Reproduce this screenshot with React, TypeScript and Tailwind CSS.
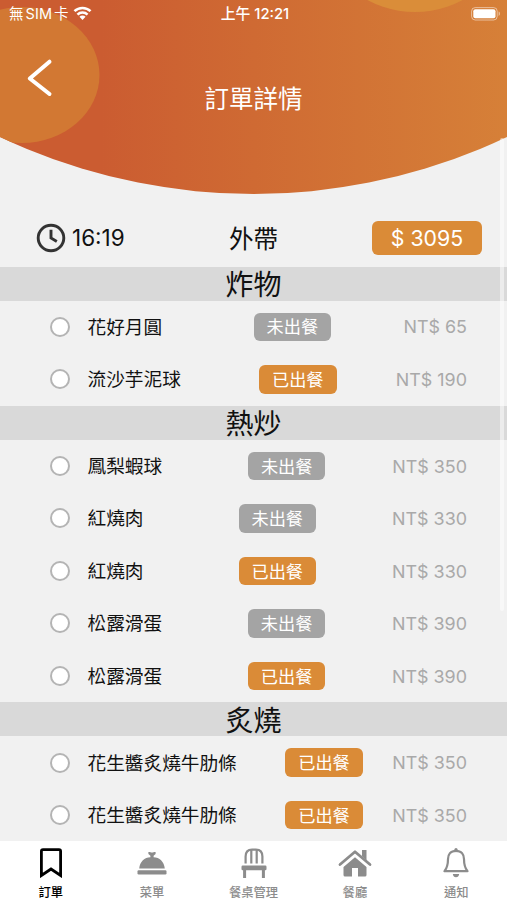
type Item = { name: string; served: boolean; price: number };
type Section = { title: string; items: Item[] };

const sections: Section[] = [
  {
    title: "炸物",
    items: [
      { name: "花好月圓", served: false, price: 65 },
      { name: "流沙芋泥球", served: true, price: 190 },
    ],
  },
  {
    title: "熱炒",
    items: [
      { name: "鳳梨蝦球", served: false, price: 350 },
      { name: "紅燒肉", served: false, price: 330 },
      { name: "紅燒肉", served: true, price: 330 },
      { name: "松露滑蛋", served: false, price: 390 },
      { name: "松露滑蛋", served: true, price: 390 },
    ],
  },
  {
    title: "炙燒",
    items: [
      { name: "花生醬炙燒牛肋條", served: true, price: 350 },
      { name: "花生醬炙燒牛肋條", served: true, price: 350 },
    ],
  },
];

function WifiIcon() {
  return (
    <svg width="19" height="14" viewBox="0 0 20 15" fill="none" stroke="white" strokeWidth="2.7">
      <path d="M1.4 5.6a12.2 12.2 0 0 1 17.2 0" />
      <path d="M4.6 9.2a7.7 7.7 0 0 1 10.8 0" />
      <path d="M10 15 6.7 11.6a4.7 4.7 0 0 1 6.6 0Z" fill="white" stroke="none" />
    </svg>
  );
}

function BatteryIcon() {
  return (
    <svg width="30" height="14" viewBox="0 0 30 14" fill="none">
      <rect x="0.6" y="0.6" width="25.6" height="12.4" rx="3.6" stroke="white" strokeOpacity="0.5" />
      <rect x="2.3" y="2.3" width="22.2" height="9" rx="2" fill="white" />
      <path d="M27.6 4.6v4.4c1.8-.6 1.8-3.8 0-4.4Z" fill="white" fillOpacity="0.5" />
    </svg>
  );
}

function Header() {
  return (
    <header className="relative h-[195px] shrink-0 text-white">
      <svg className="absolute inset-0" width="507" height="195" viewBox="0 0 507 195">
        <defs>
          <linearGradient id="dome" x1="0" x2="1" y1="0" y2="0">
            <stop offset="0.2" stopColor="#cb5c31" />
            <stop offset="0.5" stopColor="#cf6a33" />
            <stop offset="1" stopColor="#d68038" />
          </linearGradient>
          <clipPath id="domeClip">
            <circle cx="253.5" cy="-398" r="592" />
          </clipPath>
        </defs>
        <g clipPath="url(#domeClip)">
          <rect width="507" height="195" fill="url(#dome)" />
          <ellipse cx="22" cy="75" rx="77.5" ry="68" fill="#d27833" />
          <ellipse cx="415" cy="-56" rx="84" ry="68" fill="#da8d39" />
        </g>
      </svg>
      <div className="relative grid h-[27px] grid-cols-3 items-center pl-[9px] pr-[6px]">
        <div className="flex items-center text-[14.5px]">
          <span>無</span>
          <span className="mx-[2px] tracking-[0.1px]">SIM</span>
          <span>卡</span>
          <span className="-mt-px ml-[4px]">
            <WifiIcon />
          </span>
        </div>
        <span className="pt-[2px] text-center text-[14.8px] font-medium">上午 12:21</span>
        <div className="flex justify-end">
          <BatteryIcon />
        </div>
      </div>
      <div className="relative flex h-[144px] items-center justify-center">
        <h1 className="text-[24.5px]">訂單詳情</h1>
      </div>
      <svg className="absolute left-[26px] top-[57px]" width="27" height="40" viewBox="0 0 27 40" fill="none" stroke="white" strokeWidth="4" strokeLinecap="round" strokeLinejoin="round">
        <path d="M23.5 4.700 3.800 21.5 23.500 37" />
      </svg>
    </header>
  );
}

function Summary() {
  return (
    <div className="grid h-[71.5px] shrink-0 grid-cols-[1fr_60px_1fr] items-center pt-[14px]">
      <div className="flex items-center gap-[6px] pl-9">
        <svg width="30" height="30" viewBox="0 0 30 30" fill="none" stroke="#333" strokeWidth="2.9">
          <circle cx="15" cy="15" r="12.8" />
          <path d="M15 6.8V15l5.8 3.4" />
        </svg>
        <span className="pt-px text-[22.5px]">16:19</span>
      </div>
      <span className="pt-[4px] text-center text-[24.5px]">外帶</span>
      <span className="mr-[25px] flex h-[34px] w-[110px] items-center justify-center justify-self-end rounded-[6px] bg-[#da8b37] pt-[2px] text-[21.3px] text-white">
        $ 3095
      </span>
    </div>
  );
}

function ItemRow({ item }: { item: Item }) {
  return (
    <li className="flex h-[52.5px] items-center pl-[49.5px] pr-10">
      <span className="mr-[18px] size-[20px] shrink-0 rounded-full border-2 border-[#b4b4b4] bg-white" />
      <div className="flex flex-1 items-center justify-between">
        <span className="mr-[19px] pt-[2px] text-[18.66px]">{item.name}</span>
        <span
          className={`flex h-[28.5px] w-[77.5px] items-center justify-center rounded-[6px] pt-px text-[17.2px] text-white ${
            item.served ? "bg-[#da8b37]" : "bg-[#a4a4a4]"
          }`}
        >
          {item.served ? "已出餐" : "未出餐"}
        </span>
        <span className="pt-[2px] text-[17.9px] text-[#a9a9a9]">NT$ {item.price}</span>
      </div>
    </li>
  );
}

function Tab({ label, active, children }: { label: string; active?: boolean; children: React.ReactNode }) {
  return (
    <button className={`flex flex-1 flex-col items-center pt-[6px] ${active ? "text-black" : "text-[#8c8c8c]"}`}>
      <span className="flex h-[32px] shrink-0 items-center justify-center">{children}</span>
      <span className="mt-[4px] text-[12.3px] font-medium leading-[20px]">{label}</span>
    </button>
  );
}

function TabBar() {
  return (
    <nav className="flex h-[59px] shrink-0 items-start bg-white">
      <Tab label="訂單" active>
        <svg width="24" height="30" viewBox="0 0 24 30" fill="none" stroke="currentColor" strokeWidth="2.8">
          <path d="M2.4 27.5V3.2q0-1.6 1.6-1.6h16q1.6 0 1.6 1.6v24.3L12 21Z" />
        </svg>
      </Tab>
      <Tab label="菜單">
        <svg width="30" height="30" viewBox="0 0 30 30" fill="currentColor">
          <path d="M11.4 4H13q2 1 4 0h1.6v2l-2 1.8v1.5C22.5 9.5 27 13.500 27.800 20.500H2.200C3 13.500 7.500 9.500 13.400 9.300V7.800l-2-1.800Z" />
          <rect x="0.5" y="22.3" width="29" height="4.2" rx="1.2" />
        </svg>
      </Tab>
      <Tab label="餐桌管理">
        <svg width="26" height="30" viewBox="0 0 26 30" fill="none" stroke="currentColor" strokeWidth="2.2">
          <path d="M4.600 15.500V8.500Q4.600 1.600 11 1.600h4q6.400 0 6.400 6.900v7M10.300 1.600V15.500M15.700 1.600V15.500" />
          <rect x="0.5" y="17.5" width="25" height="4.8" rx="1.2" fill="currentColor" stroke="none" />
          <path d="M3.600 22v8M22.400 22v8" strokeWidth="3" />
        </svg>
      </Tab>
      <Tab label="餐廳">
        <svg width="34" height="30" viewBox="0 0 34 30" fill="currentColor">
          <path d="M24 2h4.500v10.200L24 8.200Z" />
          <path d="M17 9.200 28.500 19v8q0 1.500-1.500 1.500h-7V20h-6v8.500H7q-1.500 0-1.500-1.500v-8Z" />
          <path d="M2 16.500 17 3.800 32 16.500" fill="none" stroke="currentColor" strokeWidth="2.8" strokeLinecap="round" strokeLinejoin="round" />
          <path d="M4.300 18.400 17 7.600 29.700 18.400" fill="none" stroke="white" strokeWidth="1.3" />
        </svg>
      </Tab>
      <Tab label="通知">
        <svg width="26" height="30" viewBox="0 0 26 30" fill="none" stroke="currentColor" strokeWidth="2.2" strokeLinejoin="round">
          <path d="M13 2.8C7.5 2.8 5 6.7 5 11c0 6-.5 8.5-3.500 12.200h23C21.500 19.500 21 17 21 11c0-4.300-2.500-8.200-8-8.200Z" />
          <path d="M13 1.600v1" strokeWidth="3.2" strokeLinecap="round" />
          <path d="M9.800 26h6.400q-.6 3.200-3.200 3.200t-3.200-3.200Z" fill="currentColor" stroke="none" />
        </svg>
      </Tab>
    </nav>
  );
}

export default function App() {
  return (
    <div className="relative flex h-[900px] w-[507px] flex-col overflow-hidden bg-[#f1f1f1] font-[Inter,'Noto_Sans_CJK_TC',sans-serif] text-[#111]">
      <Header />
      <Summary />
      <main className="min-h-0 flex-1 overflow-hidden">
        {sections.map((section) => (
          <section key={section.title}>
            <h2 className="flex h-[34.1px] items-center justify-center bg-[#d9d9d9] pt-[3px] text-[28px]">
              {section.title}
            </h2>
            <ul>
              {section.items.map((item, i) => (
                <ItemRow key={i} item={item} />
              ))}
            </ul>
          </section>
        ))}
      </main>
      <TabBar />
      {/* scroll indicator */}
      <div className="absolute right-[3px] top-[138px] h-[473px] w-[4px] rounded-full bg-white/50" />
    </div>
  );
}
